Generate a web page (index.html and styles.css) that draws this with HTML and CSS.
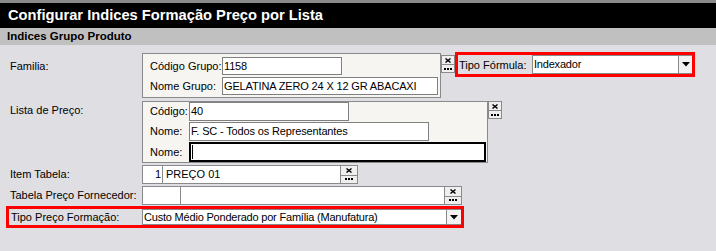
FILE: index.html
```html
<!DOCTYPE html>
<html lang="pt">
<head>
<meta charset="utf-8">
<title>Configurar Indices</title>
<link rel="stylesheet" href="styles.css">
</head>
<body>
<div class="screen">
  <div class="topstrip"></div>
  <div class="titlebar">Configurar Indices Formação Preço por Lista</div>
  <div class="subheader">Indices Grupo Produto</div>
  <div class="form">
    <div class="row row-familia">
      <div class="label lbl-familia">Familia:</div>
      <div class="panel panel-familia">
        <div class="prow"><span class="plabel pl-grupo">Código Grupo:</span><div class="input in-gcode">1158</div></div>
        <div class="prow"><span class="plabel pl-grupo">Nome Grupo:</span><div class="input in-gnome">GELATINA ZERO 24 X 12 GR ABACAXI</div></div>
      </div>
      <div class="btns btns-narrow btns-familia">
        <div class="btn"><svg width="6" height="5" viewBox="0 0 6 5"><path d="M0.5 0.5 L5.5 4.5 M5.5 0.5 L0.5 4.5" stroke="#000" stroke-width="1.4" fill="none"/></svg></div>
        <div class="btn"><svg width="8" height="2" viewBox="0 0 8 2"><rect x="0" y="0" width="2" height="2"/><rect x="3" y="0" width="2" height="2"/><rect x="6" y="0" width="2" height="2"/></svg></div>
      </div>
      <div class="redbox redbox-formula">
        <span class="flabel">Tipo Fórmula:</span>
        <div class="select sel-formula"><span class="seltext">Indexador</span><span class="arrow"><svg width="8" height="5" viewBox="0 0 8 5"><path d="M0 0 H8 L4 4.5 Z"/></svg></span></div>
      </div>
    </div>

    <div class="row row-lista">
      <div class="label lbl-lista">Lista de Preço:</div>
      <div class="panel panel-lista">
        <div class="prow"><span class="plabel pl-lista">Código:</span><div class="input in-lcode">40</div></div>
        <div class="prow"><span class="plabel pl-lista">Nome:</span><div class="input in-lnome">F. SC - Todos os Representantes</div></div>
        <div class="prow"><span class="plabel pl-lista">Nome:</span><div class="input in-lnome2 focused"><span class="caret"></span></div></div>
      </div>
      <div class="btns btns-narrow">
        <div class="btn"><svg width="6" height="5" viewBox="0 0 6 5"><path d="M0.5 0.5 L5.5 4.5 M5.5 0.5 L0.5 4.5" stroke="#000" stroke-width="1.4" fill="none"/></svg></div>
        <div class="btn"><svg width="8" height="2" viewBox="0 0 8 2"><rect x="0" y="0" width="2" height="2"/><rect x="3" y="0" width="2" height="2"/><rect x="6" y="0" width="2" height="2"/></svg></div>
      </div>
    </div>

    <div class="row row-cells">
      <div class="label lbl-line">Item Tabela:</div>
      <div class="cells">
        <div class="cell cell-num">1</div>
        <div class="cell cell-item">PREÇO 01</div>
      </div>
      <div class="btns btns-wide">
        <div class="btn"><svg width="6" height="5" viewBox="0 0 6 5"><path d="M0.5 0.5 L5.5 4.5 M5.5 0.5 L0.5 4.5" stroke="#000" stroke-width="1.4" fill="none"/></svg></div>
        <div class="btn"><svg width="8" height="2" viewBox="0 0 8 2"><rect x="0" y="0" width="2" height="2"/><rect x="3" y="0" width="2" height="2"/><rect x="6" y="0" width="2" height="2"/></svg></div>
      </div>
    </div>

    <div class="row row-cells row-forn">
      <div class="label lbl-line">Tabela Preço Fornecedor:</div>
      <div class="cells">
        <div class="cell cell-fcode"></div>
        <div class="cell cell-fnome"></div>
      </div>
      <div class="btns btns-wide">
        <div class="btn"><svg width="6" height="5" viewBox="0 0 6 5"><path d="M0.5 0.5 L5.5 4.5 M5.5 0.5 L0.5 4.5" stroke="#000" stroke-width="1.4" fill="none"/></svg></div>
        <div class="btn"><svg width="8" height="2" viewBox="0 0 8 2"><rect x="0" y="0" width="2" height="2"/><rect x="3" y="0" width="2" height="2"/><rect x="6" y="0" width="2" height="2"/></svg></div>
      </div>
    </div>

    <div class="redbox redbox-tipo">
      <span class="tlabel">Tipo Preço Formação:</span>
      <div class="select sel-tipo"><span class="seltext">Custo Médio Ponderado por Família (Manufatura)</span><span class="arrow arrow-tipo"><svg width="8" height="5" viewBox="0 0 8 5"><path d="M0 0 H8 L4 4.5 Z"/></svg></span></div>
    </div>
  </div>
</div>
</body>
</html>
```

FILE: styles.css
```css
* { box-sizing: border-box; }
html, body { margin: 0; padding: 0; }
body {
  background: #dfdee3;
  font-family: "Liberation Sans", Arial, sans-serif;
  font-size: 11px;
  color: #000;
}
.screen {
  width: 716px;
  height: 251px;
  background: #dfdee3;
  overflow: hidden;
}
.topstrip { height: 3px; background: #8a8a8a; }
.titlebar {
  height: 25px;
  line-height: 25px;
  background: #000;
  color: #fff;
  font-weight: bold;
  font-size: 14.7px;
  padding-left: 8px;
  white-space: nowrap;
}
.subheader {
  height: 17px;
  line-height: 17px;
  background: #c0c0c0;
  font-weight: bold;
  font-size: 11.5px;
  padding-left: 7px;
}
.form { display: flex; flex-direction: column; }
.row { display: flex; align-items: flex-start; }
.label {
  width: 142px;
  flex: none;
  padding-left: 10px;
  line-height: 13px;
  white-space: nowrap;
}
.row-familia { margin-top: 7px; }
.lbl-familia { padding-top: 8px; }
.row-lista { margin-top: 3px; }
.lbl-lista { padding-top: 3px; }
.panel {
  flex: none;
  background: #f6f5f1;
  border: 1px solid #8a8a8a;
  display: flex;
  flex-direction: column;
  padding-left: 7px;
}
.panel-familia {
  width: 299px;
  height: 45px;
  margin-top: 1px;
  padding-top: 3px;
  gap: 2px;
}
.panel-lista {
  width: 346px;
  height: 62px;
  padding-top: 0;
  gap: 1px;
}
.prow { display: flex; align-items: center; }
.plabel { flex: none; white-space: nowrap; line-height: 13px; }
.pl-grupo { width: 72px; }
.pl-lista { width: 39px; }
.input {
  flex: none;
  background: #fff;
  border: 1px solid #7f7f7f;
  padding: 0 1px;
  line-height: 16px;
  white-space: nowrap;
  overflow: hidden;
  letter-spacing: -0.15px;
}
.in-gcode { width: 120px; height: 18px; }
.in-gnome { width: 216px; height: 18px; }
.in-lcode { width: 160px; height: 19px; line-height: 17px; }
.in-lnome { width: 240px; height: 19px; line-height: 17px; }
.in-lnome2 { width: 297px; height: 20px; }
.focused { border: 2px solid #000; display: flex; align-items: center; padding-left: 1px; }
.caret { display: block; width: 1px; height: 14px; background: #000; }

.btns {
  flex: none;
  display: flex;
  flex-direction: column;
  border: 1px solid #8a8a8a;
  background: #efefef;
}
.btn {
  height: 8px;
  display: flex;
  align-items: center;
  justify-content: center;
}
.btn + .btn { border-top: 1px solid #8a8a8a; }
.btns-narrow { width: 14px; height: 18px; }
.btns-familia { margin-top: 3px; }
.btns-wide { width: 18px; height: 19px; }
.btns-wide .btn { height: 8.5px; }

.redbox {
  flex: none;
  border: 3px solid #ff0000;
  display: flex;
  align-items: center;
}
.redbox-formula { width: 240px; height: 25px; }
.flabel { width: 74px; flex: none; padding-left: 1px; white-space: nowrap; }
.select {
  flex: 1;
  align-self: stretch;
  display: flex;
  background: #fff;
  border: 1px solid #8a8a8a;
  border-right: none;
}
.seltext { flex: 1; line-height: 17px; padding-left: 1px; white-space: nowrap; overflow: hidden; letter-spacing: -0.2px; }
.arrow {
  flex: none;
  width: 14px;
  border-left: 1px solid #8a8a8a;
  background: #f2f2f2;
  display: flex;
  align-items: center;
  justify-content: center;
}

.row-cells { margin-top: 2px; }
.row-forn { margin-top: 2px; }
.lbl-line { line-height: 19px; }
.cells {
  flex: none;
  display: flex;
  height: 19px;
  border: 1px solid #8a8a8a;
  border-right: none;
  background: #fff;
}
.cell {
  flex: none;
  border-right: 1px solid #8a8a8a;
  line-height: 17px;
  white-space: nowrap;
}
.cell-num { width: 20px; text-align: right; padding-right: 1px; }
.cell-item { width: 177px; padding-left: 3px; border-right: none; }
.cell-fcode { width: 38px; }
.cell-fnome { width: 263px; border-right: none; }

.redbox-tipo {
  width: 458px;
  height: 22px;
  margin-top: 1px;
  margin-left: 6px;
}
.tlabel { width: 133px; flex: none; padding-left: 2px; white-space: nowrap; }
.sel-tipo .seltext { line-height: 14px; }
.arrow-tipo { width: 15px; }
```
